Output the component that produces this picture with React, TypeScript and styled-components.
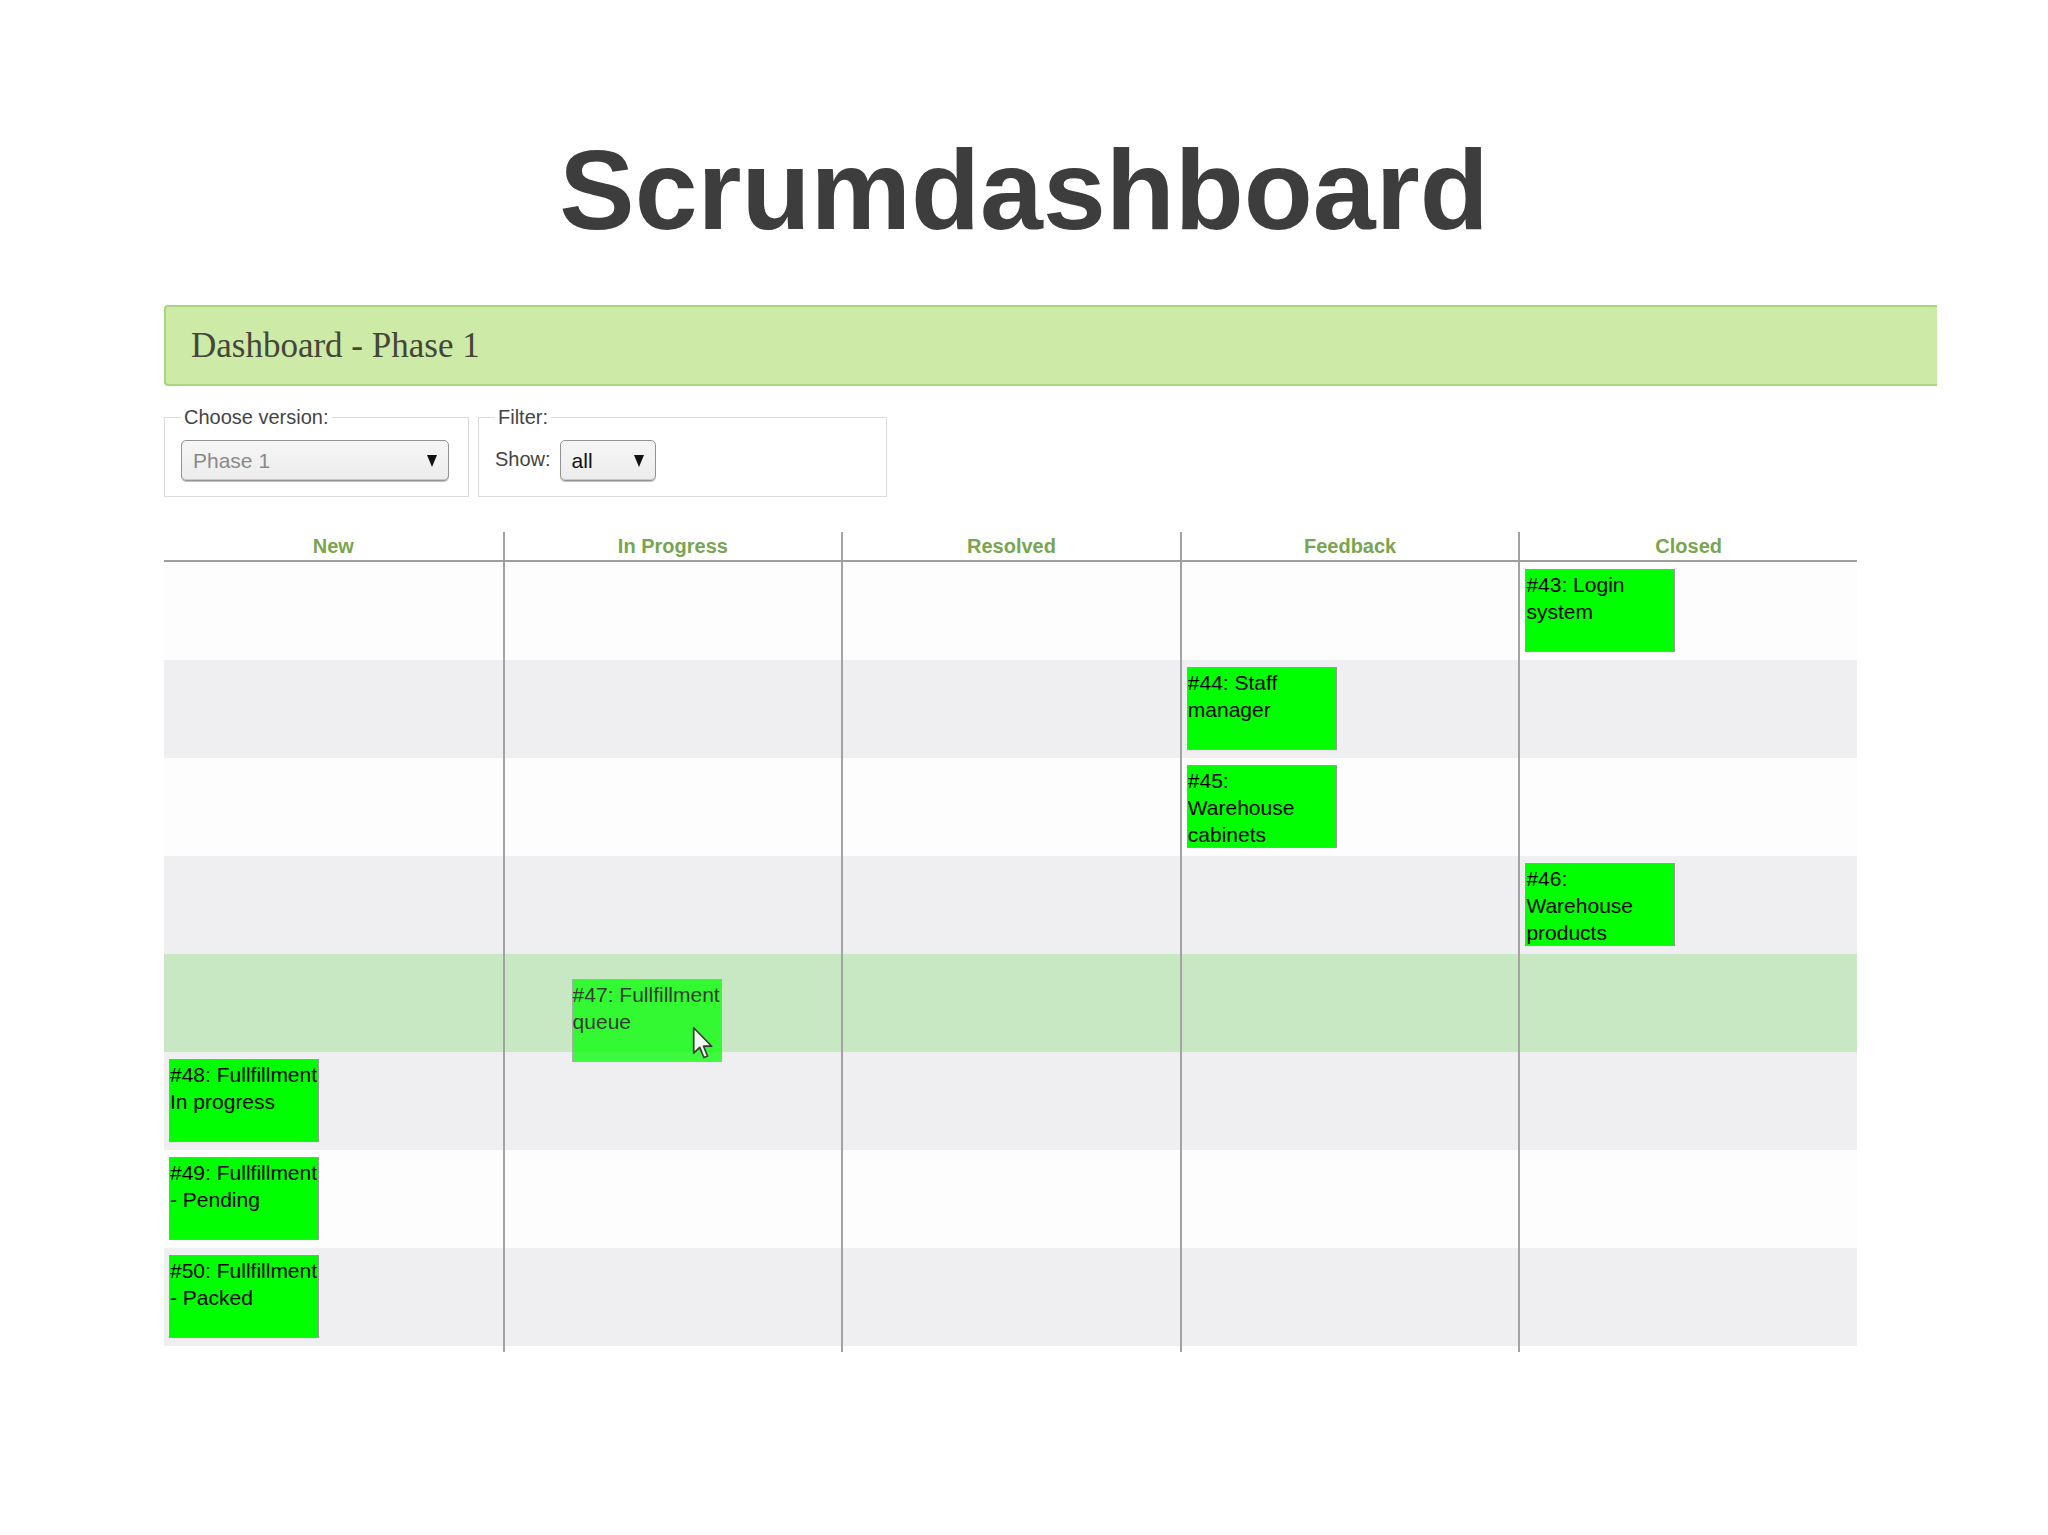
import React from 'react'
import styled, { createGlobalStyle } from 'styled-components'

const GlobalStyle = createGlobalStyle`
  html, body {
    margin: 0;
    padding: 0;
    background: #fff;
  }
  body {
    font-family: "Liberation Sans", Arial, sans-serif;
    color: #333;
  }
`

const Page = styled.div`
  width: 2048px;
  min-height: 1535px;
`

const Title = styled.h1`
  margin: 0;
  padding-top: 134px;
  font-size: 113px;
  line-height: 1;
  font-weight: 700;
  text-align: center;
  color: #3d3d3d;
`

const Content = styled.div`
  padding-left: 164px;
`

const PhaseBar = styled.div`
  box-sizing: border-box;
  width: 1773px;
  height: 81px;
  margin-top: 58px;
  padding-left: 25px;
  border: 2px solid #a8d67c;
  border-right: none;
  border-radius: 4px 0 0 4px;
  background: #cdeaa7;
  font-family: "Liberation Serif", "Times New Roman", serif;
  font-size: 35px;
  line-height: 77px;
  color: #45453a;
`

const FilterRow = styled.div`
  display: flex;
  gap: 9px;
  margin-top: 20px;
`

const FilterSet = styled.fieldset<{ $width: number }>`
  box-sizing: border-box;
  width: ${({ $width }) => $width}px;
  min-width: 0;
  margin: 0;
  padding: 11px 16px 15px;
  border: 1px solid #dadada;
  display: flex;
  align-items: center;
  gap: 9px;
`

const Legend = styled.legend`
  padding: 0 3px;
  font-size: 20px;
  line-height: 23px;
  color: #444;
`

const Label = styled.span`
  font-size: 20px;
  line-height: 23px;
  color: #444;
  margin-bottom: 3px;
`

const SelectBox = styled.div<{ $width: number; $muted?: boolean }>`
  box-sizing: border-box;
  width: ${({ $width }) => $width}px;
  height: 41px;
  display: flex;
  align-items: center;
  justify-content: space-between;
  padding: 0 11px;
  border: 1px solid #939393;
  border-radius: 5px;
  box-shadow: 0 1px 0 #c4c4c4, inset 0 -1px 0 #c9c9c9;
  background: linear-gradient(#f6f6f6, #ececec);
  font-size: 21px;
  color: ${({ $muted }) => ($muted ? '#8a8a8a' : '#111')};
`

const Caret = styled.span`
  width: 0;
  height: 0;
  border-left: 5px solid transparent;
  border-right: 5px solid transparent;
  border-top: 12px solid #111;
`

const Board = styled.div`
  width: 1693px;
  margin-top: 35px;
`

const Grid = styled.div`
  display: grid;
  grid-template-columns: repeat(5, 1fr);
`

const HeadRow = styled(Grid)`
  border-bottom: 2px solid #9e9e9e;
`

const HeadCell = styled.div<{ $first: boolean }>`
  height: 28px;
  line-height: 29px;
  text-align: center;
  font-size: 20px;
  font-weight: 700;
  color: #79a54f;
  border-left: ${({ $first }) => ($first ? 'none' : '2px solid #a3a3a3')};
`

type Tone = 'light' | 'shade' | 'drop'

const toneColors: Record<Tone, string> = {
  light: '#fdfdfd',
  shade: '#efeff1',
  drop: '#c8e8c3',
}

const BoardRow = styled(Grid)<{ $tone: Tone }>`
  height: 98px;
  background: ${({ $tone }) => toneColors[$tone]};
`

const Cell = styled.div<{ $first: boolean }>`
  position: relative;
  padding: 7px 0 0 5px;
  border-left: ${({ $first }) => ($first ? 'none' : '2px solid #a3a3a3')};
`

const FootRow = styled(Grid)`
  height: 6px;
`

const FootCell = styled.div<{ $first: boolean }>`
  border-left: ${({ $first }) => ($first ? 'none' : '2px solid #a3a3a3')};
`

const Card = styled.div<{ $ghost?: boolean }>`
  box-sizing: border-box;
  width: 150px;
  height: 83px;
  padding-top: 1px;
  border: 1px solid #9a9a9a;
  background: #00ff00;
  font-size: 21px;
  line-height: 27px;
  color: #000;
  overflow: hidden;
  ${({ $ghost }) =>
    $ghost &&
    `
    position: absolute;
    left: 67px;
    top: 25px;
    opacity: 0.74;
    overflow: visible;
  `}
`

const Pointer = styled.svg`
  position: absolute;
  left: 119px;
  top: 46px;
`

const columns = ['New', 'In Progress', 'Resolved', 'Feedback', 'Closed']

type Ticket = { id: number; title: string; col: number; dragging?: boolean }

const tickets: Ticket[] = [
  { id: 43, title: 'Login system', col: 4 },
  { id: 44, title: 'Staff manager', col: 3 },
  { id: 45, title: 'Warehouse cabinets', col: 3 },
  { id: 46, title: 'Warehouse products', col: 4 },
  { id: 47, title: 'Fullfillment queue', col: 1, dragging: true },
  { id: 48, title: 'Fullfillment In progress', col: 0 },
  { id: 49, title: 'Fullfillment - Pending', col: 0 },
  { id: 50, title: 'Fullfillment - Packed', col: 0 },
]

const CursorIcon = () => (
  <Pointer width="22" height="34" viewBox="0 0 13 20">
    <path
      d="M1 1 L1 16 L4.6 12.6 L7 18.6 L9.2 17.7 L6.8 11.9 L11.6 11.9 Z"
      fill="#fff"
      stroke="#000"
      strokeWidth="1"
      strokeLinejoin="round"
    />
  </Pointer>
)

const App = () => {
  return (
    <Page>
      <GlobalStyle />
      <Title>Scrumdashboard</Title>
      <Content>
        <PhaseBar>Dashboard - Phase 1</PhaseBar>

        <FilterRow>
          <FilterSet $width={305}>
            <Legend>Choose version:</Legend>
            <SelectBox $width={268} $muted>
              <span>Phase 1</span>
              <Caret />
            </SelectBox>
          </FilterSet>
          <FilterSet $width={409}>
            <Legend>Filter:</Legend>
            <Label>Show:</Label>
            <SelectBox $width={96}>
              <span>all</span>
              <Caret />
            </SelectBox>
          </FilterSet>
        </FilterRow>

        <Board>
          <HeadRow>
            {columns.map((name, i) => (
              <HeadCell key={name} $first={i === 0}>
                {name}
              </HeadCell>
            ))}
          </HeadRow>

          {tickets.map((t, r) => (
            <BoardRow key={t.id} $tone={t.dragging ? 'drop' : r % 2 ? 'shade' : 'light'}>
              {columns.map((name, i) => (
                <Cell key={name} $first={i === 0}>
                  {i === t.col && (
                    <Card $ghost={t.dragging}>
                      {`#${t.id}: ${t.title}`}
                      {t.dragging && <CursorIcon />}
                    </Card>
                  )}
                </Cell>
              ))}
            </BoardRow>
          ))}

          <FootRow>
            {columns.map((name, i) => (
              <FootCell key={name} $first={i === 0} />
            ))}
          </FootRow>
        </Board>
      </Content>
    </Page>
  )
}

export default App
